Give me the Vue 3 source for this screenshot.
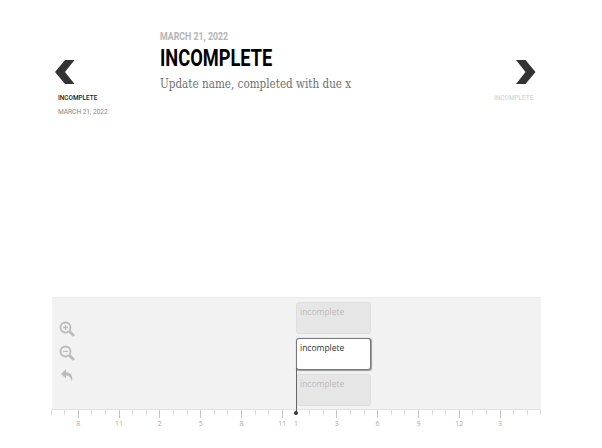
<script setup>
const labels = { 2: '8', 5: '11', 8: '2', 11: '5', 14: '8', 17: '11', 18: '1', 21: '3', 24: '6', 27: '9', 30: '12', 33: '3' }
const majors = [2, 5, 8, 11, 14, 17, 21, 24, 27, 30, 33]
const ticks = Array.from({ length: 37 }, (_, i) => ({
  id: i,
  label: labels[i] || '',
  major: majors.includes(i)
}))
</script>

<template>
  <div class="page">
    <section class="story">
      <div class="nav nav-prev">
        <svg class="chevron" width="20" height="24" viewBox="0 0 20 24"><path d="M10 0H19.5L10 12L19.5 24H10L0 12Z" fill="#333" /></svg>
        <div class="nav-title">INCOMPLETE</div>
        <div class="nav-date">MARCH 21, 2022</div>
      </div>
      <div class="main">
        <div class="date">MARCH 21, 2022</div>
        <h1>INCOMPLETE</h1>
        <p>Update name, completed with due x</p>
      </div>
      <div class="nav nav-next">
        <svg class="chevron" width="20" height="24" viewBox="0 0 20 24"><path d="M0 0H9.5L19.5 12L9.5 24H0L9.5 12Z" fill="#333" /></svg>
        <div class="nav-title faint">INCOMPLETE</div>
      </div>
    </section>

    <section class="timeline">
      <div class="band">
        <div class="tools">
          <svg width="16" height="16" viewBox="0 0 16 16" fill="none" stroke="#bbb">
            <circle cx="6.5" cy="6.5" r="5" stroke-width="1.8" />
            <path d="M10.5 10.5L15 15" stroke-width="2.6" />
            <path d="M4 6.5H9M6.5 4V9" stroke-width="1.3" />
          </svg>
          <svg width="16" height="16" viewBox="0 0 16 16" fill="none" stroke="#bbb">
            <circle cx="6.5" cy="6.5" r="5" stroke-width="1.8" />
            <path d="M10.5 10.5L15 15" stroke-width="2.6" />
            <path d="M4 6.5H9" stroke-width="1.3" />
          </svg>
          <svg width="14" height="14" viewBox="0 0 14 14"><path d="M6 1L1 6L6 10.5V7.6C9 7.6 11 9.5 11.8 13.5C13.4 8.5 11 4.2 6 4.2Z" fill="#bbb" /></svg>
        </div>
        <div class="cards">
          <div class="card">incomplete</div>
          <div class="card active">incomplete</div>
          <div class="card">incomplete</div>
        </div>
      </div>
      <div class="ruler">
        <div v-for="t in ticks" :key="t.id" class="tick">
          <span class="mark" :class="{ major: t.major }"></span>
          <span class="label">{{ t.label }}</span>
        </div>
        <span class="dot"></span>
      </div>
    </section>
  </div>
</template>

<style>
html, body { margin: 0; background: #fff; }
</style>

<style scoped>
.page {
  width: 602px;
  height: 448px;
  overflow: hidden;
  font-family: Roboto, "Liberation Sans", sans-serif;
  display: flex;
  flex-direction: column;
}
.story {
  height: 297px;
  display: flex;
  flex: none;
}
.nav {
  display: flex;
  flex-direction: column;
  align-items: flex-start;
  padding-top: 60px;
}
.nav-prev {
  width: 105px;
  margin-left: 55px;
}
.nav-prev .nav-title, .nav-prev .nav-date { margin-left: 3px; }
.nav-next {
  width: 50px;
}
.nav-next .chevron { margin-left: 26px; }
.nav-next .nav-title { margin-left: 4px; }
.chevron { display: block; flex: none; }
.nav-title {
  margin-top: 9px;
  font-size: 8px;
  line-height: 10px;
  font-weight: 500;
  color: #222;
  white-space: nowrap;
  transform: scaleX(.8);
  transform-origin: left;
}
.nav-title.faint { color: #d8d8d8; }
.nav-date {
  margin-top: 4px;
  font-size: 8px;
  line-height: 10px;
  color: #888;
  white-space: nowrap;
  transform: scaleX(.82);
  transform-origin: left;
}
.main {
  width: 330px;
  padding-top: 30px;
}
.date {
  font-size: 11px;
  line-height: 13px;
  font-weight: 700;
  color: #b4b4b4;
  white-space: nowrap;
  transform: scaleX(.8);
  transform-origin: left;
}
h1 {
  margin: 2px 0 0;
  font-size: 24px;
  line-height: 27px;
  font-weight: 700;
  color: #000;
  white-space: nowrap;
  transform: scaleX(.76);
  transform-origin: left;
}
p {
  margin: 4px 0 0;
  font-family: "DejaVu Serif Condensed", "DejaVu Serif", serif;
  font-size: 12px;
  line-height: 17px;
  color: #6f6f6f;
  white-space: nowrap;
  transform: scaleX(.965);
  transform-origin: left;
}
.timeline {
  width: 489px;
  margin-left: 52px;
  position: relative;
}
.band {
  height: 113px;
  box-sizing: border-box;
  background: #f2f2f2;
  border-top: 1px solid #ececec;
  border-bottom: 1px solid #e2e2e2;
  display: flex;
}
.tools {
  width: 244px;
  box-sizing: border-box;
  padding: 23px 0 0 7px;
  display: flex;
  flex-direction: column;
  align-items: flex-start;
  gap: 8px;
}
.tools svg { display: block; }
.tools svg:last-child { margin-left: 1px; margin-top: -1px; }
.cards {
  padding-top: 4px;
  display: flex;
  flex-direction: column;
  gap: 4px;
  position: relative;
}
.cards::after {
  content: "";
  position: absolute;
  left: 0;
  top: 70px;
  height: 45px;
  width: 1px;
  background: #666;
}
.card {
  width: 75px;
  height: 32px;
  box-sizing: border-box;
  padding: 2px 3px;
  border-radius: 3px;
  background: #e6e6e6;
  border: 1px solid #dedede;
  font-family: "Open Sans", "Liberation Sans", sans-serif;
  font-size: 8.5px;
  line-height: 13px;
  color: #bbb;
}
.card.active {
  background: #fff;
  border: 1px solid #777;
  color: #333;
  box-shadow: 0.5px 0.5px 1px #999;
}
.ruler {
  position: relative;
  display: flex;
  gap: 13.62px;
  height: 28px;
  margin-left: -1px;
}
.tick {
  width: 0;
  display: flex;
  flex-direction: column;
  align-items: center;
}
.mark {
  flex: none;
  width: 1px;
  height: 5px;
  background: #dcdcdc;
}
.mark.major {
  height: 8px;
  background: #c4c4c4;
}
.label {
  position: absolute;
  top: 9px;
  font-family: "Open Sans", "Liberation Sans", sans-serif;
  font-size: 7px;
  line-height: 10px;
  color: #aaa;
}
.dot {
  position: absolute;
  left: 243px;
  top: 1px;
  width: 4px;
  height: 4px;
  border-radius: 50%;
  background: #333;
}
</style>
